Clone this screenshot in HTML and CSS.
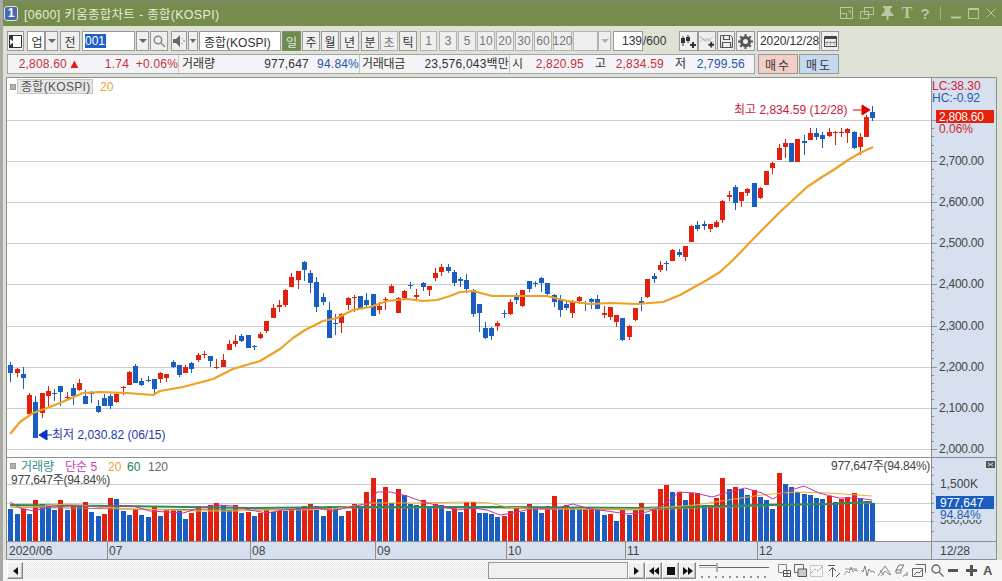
FILE: index.html
```html
<!DOCTYPE html>
<html>

<head>
  <title>[0600] 키움종합차트 - 종합(KOSPI)</title>
  <link rel="stylesheet" href="styles.css">
</head>

<body>
  <header class="titlebar">
    <span class="app-badge">1</span>
    <span class="title-text">[0600] 키움종합차트 - 종합(KOSPI)</span>
    <div class="title-icons">
      <svg class="t-ico" width="13" height="12" viewBox="0 0 13 12"><path d="M.5.5h12v11H.5zM6.5 11.5v-5h-6"/><path d="M8 4h2.5v2.5"/></svg>
      <svg class="t-ico" width="14" height="12" viewBox="0 0 14 12"><path d="M4.5.5h9v7h-9zM.5 4.5h8v7h-8z"/></svg>
      <svg class="t-ico solid" width="13" height="14" viewBox="0 0 13 14"><path d="M2 0h9v2H9.500v4L12.500 8.500v1.500H7.500v4h-2v-4H.5V8.500L3.500 6V2H2z"/></svg>
      <span class="t-letter">T</span>
      <span class="t-help">?</span>
      <span class="t-sep"></span>
      <svg class="t-ico" width="10" height="12" viewBox="0 0 10 12"><path d="M0 10.500h10" stroke-width="2"/></svg>
      <svg class="t-ico" width="11" height="11" viewBox="0 0 11 11"><path d="M.5.5h10v10H.5zM.5 1.500h10" /></svg>
      <svg class="t-ico" width="10" height="10" viewBox="0 0 10 10"><path d="M.5.5l9 9M9.500.5l-9 9"/></svg>
    </div>
  </header>

  <div class="toolbar">
    <button class="btn w17"><svg width="15" height="15" viewBox="0 0 15 15"><path d="M1.500 1.500h12v12h-12z" fill="#fff" stroke="#333"/><path d="M1 1h4v13H1z" fill="#333"/><path d="M2 5l4 3-4 3z" fill="#fff"/></svg></button>
    <div class="field w18 sp3 center">업</div>
    <button class="btn w13"><i class="caret"></i></button>
    <button class="btn w20 sp2">전</button>
    <div class="field w53 sp2"><span class="selected">001</span></div>
    <button class="btn w13 sp1"><i class="caret"></i></button>
    <button class="btn w18 sp1"><svg width="13" height="13" viewBox="0 0 13 13" fill="none" stroke="#888" stroke-width="1.500"><circle cx="5" cy="5" r="3.700"/><path d="M8 8l4 4"/></svg></button>
    <button class="btn w16 sp3"><svg width="13" height="12" viewBox="0 0 13 12"><path d="M0 4h3l4-4v12L3 8H0z" fill="#666"/><path d="M9 3v1M11 5v2M9 8v1" stroke="#888"/></svg></button>
    <button class="btn w10 sp1"><i class="caret small"></i></button>
    <div class="field w82 sp1 name">종합(KOSPI)</div>
    <button class="btn w19 sp1 active">일</button>
    <button class="btn w18 sp1">주</button>
    <button class="btn w18 sp1">월</button>
    <button class="btn w19 sp1">년</button>
    <button class="btn w18 sp2">분</button>
    <button class="btn w18 sp1 dim">초</button>
    <button class="btn w18 sp1">틱</button>
    <button class="btn w17 sp3 dim">1</button>
    <button class="btn w18 sp2 dim">3</button>
    <button class="btn w18 sp1 dim">5</button>
    <button class="btn w18 sp1 dim">10</button>
    <button class="btn w18 sp1 dim">20</button>
    <button class="btn w18 sp1 dim">30</button>
    <button class="btn w18 sp1 dim">60</button>
    <button class="btn w19 sp1 dim">120</button>
    <button class="btn w25 sp1 dim"></button>
    <button class="btn w13 dim"><i class="caret pale"></i></button>
    <div class="field w30 sp2 right">139</div>
    <span class="count">/600</span>
    <button class="btn w19 push"><svg width="17" height="15" viewBox="0 0 17 15"><path d="M3 2v10M8 1v8" stroke="#333"/><path d="M1 4h4v5H1zM6 3h4v4H6z" fill="#333"/><path d="M13 8v6M10 11h6" stroke="#333" stroke-width="2"/></svg></button>
    <button class="btn w18"><svg width="17" height="15" viewBox="0 0 17 15" fill="none"><path d="M1 2l5 5 3-3 5 5" stroke="#999"/><path d="M1 8l4-4 4 4 6-6" stroke="#bbb"/><path d="M13 8v6M10 11h6" stroke="#333" stroke-width="2"/></svg></button>
    <button class="btn w18 sp1"><svg width="15" height="15" viewBox="0 0 15 15" fill="none" stroke="#555"><path d="M1.500 1.500h10l2 2v10h-12z"/><path d="M4.500 1.500v4h6v-4M3.500 13.500v-5h8v5" stroke-width="1.200"/></svg></button>
    <button class="btn w19 sp1"><svg width="15" height="15" viewBox="0 0 15 15"><circle cx="7.500" cy="7.500" r="4" fill="none" stroke="#555" stroke-width="3"/><path d="M7.500 0v3M7.500 12v3M0 7.500h3M12 7.500h3M2.200 2.200l2 2M10.800 10.800l2 2M2.200 12.800l2-2M10.800 4.200l2-2" stroke="#555" stroke-width="2"/></svg></button>
    <div class="field w63 sp2 date">2020/12/28</div>
    <button class="btn w18 sp1"><svg width="13" height="12" viewBox="0 0 13 12" fill="none" stroke="#444"><path d="M.5 1.500h12v10H.5z"/><path d="M.5 2.500h12M.5 3.500h12" stroke="#444"/><path d="M3 6v4M6.500 6v4M10 6v4M1 7.500h11" stroke="#999"/></svg></button>
  </div>

  <div class="quote-row">
    <div class="quote-grid">
      <span class="num up">2,808.60</span>
      <span class="num up tri">▲</span>
      <span class="num up">1.74</span>
      <span class="num up">+0.06%</span>
      <span class="lbl cell-line">거래량</span>
      <span class="num">977,647</span>
      <span class="num down">94.84%</span>
      <span class="lbl cell-line pad">거래대금</span>
      <span class="num">23,576,043백만</span>
      <span class="lbl cell-line pad2">시</span>
      <span class="num up">2,820.95</span>
      <span class="lbl right">고</span>
      <span class="num up">2,834.59</span>
      <span class="lbl right">저</span>
      <span class="num down">2,799.56</span>
    </div>
    <button class="trade buy">매수</button>
    <button class="trade sell">매도</button>
  </div>

  <svg class="chart" width="1002" height="483" viewBox="0 77 1002 483">
    <rect class="panel" x="7" y="78" width="924" height="379"/>
    <rect class="panel" x="7" y="458" width="924" height="84"/>
    <rect class="axis-bg" x="931" y="78" width="65" height="482"/>
    <rect class="axis-bg" x="7" y="542" width="924" height="18"/>
    <path class="frame" d="M6.500 77.500h990v482H6.500zM6.500 457.500h990M6.500 541.500h990M931.500 77.500v482"/>

    <g id="grid"></g>
    <g id="volumes"></g>
    <g id="vol-lines"></g>
    <g id="candles"></g>
    <polyline id="ma20" class="ma"/>

    <!-- 가격 범례 -->
    <rect class="legend-dot" x="10.500" y="84.500" width="5" height="5"/>
    <rect class="legend-chip" x="17.500" y="79.500" width="75" height="14"/>
    <text class="txt muted wide" x="21" y="91">종합(KOSPI)</text>
    <text class="txt orange" x="100" y="91">20</text>

    <!-- 최고, 최저 표시 -->
    <text class="txt high" x="734" y="114">최고 2,834.59 (12/28)</text>
    <path class="high-arrow" d="M853 110h9M862 105l8 5-8 5z"/>
    <path class="low-arrow" d="M52 435h-5M47 430l-8 5 8 5z"/>
    <text class="txt low" x="52" y="439">최저 2,030.82 (06/15)</text>

    <!-- 가격축 -->
    <text class="txt up" x="932" y="90">LC:38.30</text>
    <text class="txt down" x="932" y="102">HC:-0.92</text>
    <g id="price-axis"></g>
    <text class="txt up" x="939" y="133">0.06%</text>
    <rect class="tag-red" x="936" y="110" width="58" height="13"/>
    <text class="txt white tight" x="939" y="121">2,808.60</text>

    <!-- 거래량 범례 -->
    <rect class="legend-dot" x="10.500" y="463.500" width="5" height="5"/>
    <text class="txt teal" x="21" y="471">거래량</text>
    <text class="txt magenta" x="65" y="471">단순 5</text>
    <text class="txt orange" x="108" y="471">20</text>
    <text class="txt green" x="127" y="471">60</text>
    <text class="txt grey" x="148" y="471">120</text>
    <text class="txt soft tight" x="11" y="484">977,647주(94.84%)</text>
    <text class="txt soft tight" x="831" y="470">977,647주(94.84%)</text>

    <!-- 거래량축 -->
    <rect class="close-chip" x="986" y="461" width="9" height="7"/>
    <path class="close-x" d="M988 463l5 3M993 463l-5 3"/>
    <text class="txt soft" x="940" y="488">1,500K</text>
    <text class="txt soft tight" x="940" y="524">500,000</text>
    <rect class="axis-bg" x="936" y="510" width="58" height="10"/>
    <text class="txt down" x="940" y="519">94.84%</text>
    <rect class="tag-blue" x="936" y="496" width="58" height="13"/>
    <text class="txt white" x="940" y="507">977,647</text>

    <!-- 시간축 -->
    <path class="frame" d="M107.500 542v18M250.500 542v18M375.500 542v18M506.500 542v18M625.500 542v18M757.500 542v18"/>
    <text class="txt axis-label" x="9" y="555">2020/06</text>
    <text class="txt axis-label" x="109" y="555">07</text>
    <text class="txt axis-label" x="252" y="555">08</text>
    <text class="txt axis-label" x="377" y="555">09</text>
    <text class="txt axis-label" x="508" y="555">10</text>
    <text class="txt axis-label" x="627" y="555">11</text>
    <text class="txt axis-label" x="759" y="555">12</text>
    <text class="txt axis-label" x="940" y="555">12/28</text>
  </svg>

  <div class="bottombar">
    <button class="scroll-btn first"><i class="tri-left"></i></button>
    <div class="track"></div>
    <div class="thumb"></div>
    <button class="scroll-btn"><i class="tri-right"></i></button>
    <button class="scroll-btn"><i class="tri-left"></i><i class="tri-left"></i></button>
    <button class="scroll-btn"><i class="stop"></i></button>
    <button class="scroll-btn"><i class="tri-right"></i><i class="tri-right"></i></button>
    <svg class="slider" width="70" height="17" viewBox="0 0 70 17"><path d="M0 3.500h17M19 5.500h51M18 1v9" stroke="#666" fill="none"/><path d="M0 5.500h17" stroke="#bbb"/><path d="M3 14v2M10 14v2M17 14v2M24 14v2M31 14v2M38 14v2M45 14v2M52 14v2M59 14v2M66 14v2" stroke="#333"/></svg>
    <div class="tool-icons">
      <svg width="13" height="13" viewBox="0 0 13 13"><path d="M.5.5h8v8h-8z" fill="none" stroke="#888"/><path d="M5.500 6.500h7v6h-7zM9 6.500v6M5.500 9.500h7" fill="#fff" stroke="#555"/></svg>
      <svg width="13" height="13" viewBox="0 0 13 13"><path d="M.5.500h9v8h-9z" fill="none" stroke="#666"/><path d="M4 5h8.500v7.500H4z" fill="#ccc" stroke="#555"/></svg>
      <svg width="14" height="13" viewBox="0 0 14 13" fill="none" stroke="#999" stroke-dasharray="1 1"><path d="M.5 1.500h12v11H.5z"/><path d="M1 9l4-4 3 2 5-5" stroke="#777"/></svg>
      <svg class="pressed" width="14" height="14" viewBox="0 0 14 14" fill="none" stroke="#555"><path d="M1 1.500h7M5.500 13V4M2 7l3.500-3.500L9 7M9 13l4-4" /></svg>
      <svg width="14" height="13" viewBox="0 0 14 13" fill="none" stroke="#888"><path d="M0 11l3-4 2 2 2-6 2 5 2-2 3 1M1 5h12" stroke-width=".9"/></svg>
      <svg width="14" height="13" viewBox="0 0 14 13" fill="none" stroke="#777"><path d="M0 6l2 2 2-6 2 10 2-7 2 3 2-1 2 2" stroke-width=".9"/></svg>
      <svg width="14" height="13" viewBox="0 0 14 13" fill="none" stroke="#777"><path d="M0 12l7-10 6 9M3 12l4-5 5 4M2 6l4 5" stroke-width=".9"/></svg>
      <svg width="14" height="13" viewBox="0 0 14 13" fill="none" stroke="#777"><path d="M1 6l3-5h5L6 6H1zM1 6v3h5V6M8 12h1M10 12v-2M12 12V8" /></svg>
      <svg width="14" height="13" viewBox="0 0 14 13" fill="none" stroke="#666"><path d="M3.500.5h10v8M.5 4.500h10v8H.5z"/><path d="M2 11l3-3 2 1 3-3"/></svg>
      <svg class="zoom" width="13" height="13" viewBox="0 0 13 13" fill="none" stroke="#666" stroke-width="1.300"><circle cx="5" cy="5" r="4"/><path d="M8 8l4.500 4.500"/></svg>
      <svg class="minus" width="10" height="13" viewBox="0 0 10 13"><path d="M0 5h10v3H0z" fill="#555"/></svg>
      <svg class="plus" width="11" height="13" viewBox="0 0 11 13"><path d="M4 1h3v4h4v3H7v4H4V8H0V5h4z" fill="#555"/></svg>
      <span class="tool-a">A</span>
    </div>
  </div>

  <script src="chart.js"></script>
</body>

</html>
```

FILE: styles.css
```css
* {
  box-sizing: border-box;
}

html,
body {
  margin: 0;
  padding: 0;
}

body {
  width: 1002px;
  height: 581px;
  overflow: hidden;
  background-color: #dee2d4;
  border-left: 3px solid #a9a9a9;
  font-family: "Liberation Sans", "Noto Sans CJK KR", sans-serif;
  font-size: 12px;
  color: #333;
}

.titlebar {
  display: flex;
  align-items: center;
  height: 26px;
  margin-left: -3px;
  padding-left: 4px;
  background: linear-gradient(#7d8a68 0, #768c4c 5px, #768c4c 100%);
  color: #e6ebd8;
}

.app-badge {
  width: 14px;
  height: 15px;
  border: 1px solid #dfe6f4;
  border-radius: 3px;
  background-color: #4a68ae;
  color: #fff;
  font-size: 12px;
  font-weight: bold;
  line-height: 13px;
  text-align: center;
}

.title-text {
  margin-left: 6px;
  font-size: 12.5px;
  letter-spacing: 0.3px;
}

.title-icons {
  display: flex;
  align-items: center;
  margin-left: auto;
  padding-right: 6px;
  gap: 7px;
}

.t-ico {
  fill: none;
  stroke: #bcc6a4;
}

.t-ico.solid {
  fill: #bcc6a4;
  stroke: none;
}

.t-letter {
  width: 12px;
  color: #bcc6a4;
  font-family: "Liberation Serif", serif;
  font-size: 16px;
  font-weight: bold;
  text-align: center;
}

.t-help {
  width: 10px;
  color: #bcc6a4;
  font-size: 15px;
  font-weight: bold;
  text-align: center;
}

.t-sep {
  width: 1px;
  height: 14px;
  margin: 0 3px;
  background-color: #a3b083;
}

.toolbar {
  display: flex;
  height: 26px;
  padding: 5px 0 0 4px;
}

.btn,
.field {
  display: flex;
  flex: none;
  align-items: center;
  justify-content: center;
  height: 20px;
  padding: 0;
  border: 1px solid #9a9a9a;
  background-color: #efefef;
  color: #333;
  font-family: inherit;
  font-size: 12px;
}

.field {
  justify-content: flex-start;
  padding-left: 2px;
  background-color: #fff;
}

.field.center {
  justify-content: center;
}

.field.right {
  justify-content: flex-end;
}

.w10 { width: 10px; }
.w13 { width: 13px; }
.w16 { width: 16px; }
.w17 { width: 17px; }
.w18 { width: 18px; }
.w19 { width: 19px; }
.w20 { width: 20px; }
.w25 { width: 25px; }
.w30 { width: 30px; }
.w53 { width: 53px; }
.w63 { width: 63px; }
.w82 { width: 82px; }

.sp1 { margin-left: 1px; }
.sp2 { margin-left: 2px; }
.sp3 { margin-left: 3px; }
.push { margin-left: 11px; }

.selected {
  background-color: #1f5fc8;
  color: #fff;
  padding-right: 1px;
}

.name {
  padding-left: 4px;
}

.date {
  letter-spacing: -0.1px;
}

.active {
  border-color: #7c9060;
  background-color: #6f8a50;
  color: #e6ebd8;
}

.dim {
  border-color: #b4b4b4;
  color: #777;
}

.count {
  width: 25px;
  line-height: 20px;
  color: #333;
}

.caret {
  width: 0;
  height: 0;
  border-top: 4px solid #666;
  border-left: 4px solid transparent;
  border-right: 4px solid transparent;
}

.caret.small {
  border-left-width: 3px;
  border-right-width: 3px;
}

.caret.pale {
  border-top-color: #b0b0b0;
}

.quote-row {
  display: flex;
  height: 25px;
  padding: 2px 0 0 4px;
}

.quote-grid {
  display: grid;
  grid-template-columns: 59px 14px 48px 49px 39px 92px 50px 53px 97px 15px 60px 22px 58px 22px 59px;
  width: 748px;
  height: 20px;
  border: 1px solid #a4a4a4;
  background-color: #f2f4f8;
  line-height: 18px;
}

.num {
  text-align: right;
  letter-spacing: 0.2px;
}

.up {
  color: #c9303a;
  fill: #c9303a;
}

.down {
  color: #2a55a8;
  fill: #2a55a8;
}

.tri {
  font-size: 13px;
  color: #e2200e;
}

.lbl {
  padding-left: 3px;
  background-color: #f4f5f2;
}

.lbl.right {
  padding-left: 0;
  background: none;
  text-align: right;
}

.cell-line {
  border-left: 1px solid #c6c6c6;
}

.pad {
  padding-left: 2px;
  letter-spacing: -0.3px;
}

.pad2 {
  padding-left: 2px;
}

.trade {
  width: 40px;
  height: 20px;
  padding: 0;
  border: 1px solid #9a9a9a;
  color: #333;
  font-family: inherit;
  font-size: 12px;
  letter-spacing: 2px;
}

.buy {
  margin-left: 3px;
  background-color: #f4cdc7;
}

.sell {
  margin-left: 1px;
  background-color: #c5d9ef;
}

.chart {
  display: block;
  margin-left: -3px;
}

.panel {
  fill: #fff;
}

.axis-bg {
  fill: #d6e0ee;
}

.frame {
  fill: none;
  stroke: #8e8e8e;
}

.gridline {
  stroke: #cdcdcd;
}

.tick {
  stroke: #8e8e8e;
}

.ma {
  fill: none;
  stroke: #f0a023;
  stroke-width: 2.2;
  stroke-linejoin: round;
}

.txt {
  font-family: "Liberation Sans", "Noto Sans CJK KR", sans-serif;
  font-size: 12px;
  fill: #333;
}

.txt.soft { fill: #444; }
.txt.tight { letter-spacing: -0.25px; }
.txt.wide { letter-spacing: 0.3px; }
.txt.muted { fill: #555; }
.txt.orange { fill: #e8a33a; }
.txt.teal { fill: #2e8b8b; }
.txt.magenta { fill: #c63cab; }
.txt.green { fill: #1f8048; }
.txt.grey { fill: #666; }
.txt.white { fill: #fff; }
.txt.high { fill: #c8203c; }
.txt.low { fill: #1c3aa8; }
.txt.up { fill: #d0232e; }
.txt.down { fill: #2a5bb4; }
.txt.axis-label { fill: #444; }

.legend-dot {
  fill: #b4b4b4;
  stroke: #999;
}

.legend-chip {
  fill: #e6e6e6;
  stroke: #c8c8c8;
}

.high-arrow {
  fill: #e00000;
  stroke: #e00000;
}

.low-arrow {
  fill: #0f2fc0;
  stroke: #0f2fc0;
}

.tag-red {
  fill: #e6200c;
}

.tag-blue {
  fill: #1b5cc0;
}

.close-chip {
  fill: #555;
}

.close-x {
  stroke: #ddd;
}

.bottombar {
  display: flex;
  align-items: center;
  height: 21px;
  background-color: #f6f6f6;
  padding-left: 4px;
}

.scroll-btn {
  display: flex;
  flex: none;
  align-items: center;
  justify-content: center;
  width: 17px;
  height: 17px;
  padding: 0;
  border: 1px solid #888;
  border-top-color: #fff;
  border-left-color: #fff;
  background-color: #f0f0f0;
  box-shadow: inset -1px -1px 0 #bbb;
}

.scroll-btn.first {
  width: 16px;
}

.track {
  flex: none;
  width: 465px;
  height: 17px;
  background-color: #f2f2f2;
  background-image: repeating-conic-gradient(#e6e6e6 0 25%, #fbfbfb 0 50%);
  background-size: 2px 2px;
}

.thumb {
  flex: none;
  width: 140px;
  height: 17px;
  border: 1px solid #999;
  background-color: #f0f0f0;
}

.tri-left,
.tri-right {
  width: 0;
  height: 0;
  border-top: 4px solid transparent;
  border-bottom: 4px solid transparent;
}

.tri-left {
  border-right: 5px solid #111;
}

.tri-right {
  border-left: 5px solid #111;
}

.stop {
  width: 8px;
  height: 8px;
  background-color: #111;
}

.slider {
  flex: none;
  margin-left: 3px;
}

.tool-icons {
  display: flex;
  align-items: center;
  gap: 3px;
  margin-left: 9px;
}

.tool-icons svg {
  flex: none;
}

.tool-icons .zoom {
  margin-left: 2px;
}

.tool-icons .minus {
  margin-left: 1px;
}

.tool-icons .plus {
  margin-left: 5px;
}

.tool-a {
  margin-left: 3px;
  color: #555;
  font-size: 13px;
  font-weight: bold;
}
```

FILE: chart.js
```js
const NS = 'http://www.w3.org/2000/svg';
const STEP = 6.246;
const X0 = 10.3;

// [색, 몸통 위, 몸통 아래, 꼬리 위, 꼬리 아래] (픽셀 y)
const candles = [
  ['b',365,373,362,382],['r',369,373,368,377],['b',374,378,367,389],['r',395,414,393,416],
  ['b',402,438,396,438],['r',393,413,393,418],['r',391,396,386,407],['b',393,394,389,401],
  ['b',386,392,386,406],['r',397,398,392,401],['b',388,396,384,405],['r',383,390,379,391],
  ['b',396,404,390,404],['b',393,394,391,403],['b',406,412,400,413],['b',398,406,394,406],
  ['b',396,406,394,409],['r',394,402,393,403],['r',387,388,386,395],['r',372,385,371,385],
  ['b',366,383,364,383],['b',381,385,378,386],['b',380,381,376,382],['b',379,389,379,393],
  ['r',373,379,372,383],['r',374,378,374,382],['b',362,367,360,368],['b',365,375,365,377],
  ['r',367,373,365,373],['b',363,369,362,373],['r',355,360,353,362],['r',354,355,351,358],
  ['b',356,361,356,367],['r',367,368,359,369],['r',360,367,354,367],['r',344,350,340,350],
  ['r',341,344,335,347],['b',336,341,334,342],['b',335,348,335,348],['b',346,347,345,350],
  ['r',334,338,332,339],['r',321,331,321,333],['r',308,318,304,318],['r',305,307,300,312],
  ['r',290,305,289,307],['r',277,287,273,287],['r',271,280,271,289],['b',262,270,261,281],
  ['b',273,283,270,293],['b',282,307,277,312],['b',297,302,293,305],['b',310,338,302,338],
  ['b',323,324,314,335],['r',314,323,313,333],['r',298,305,297,310],['r',297,298,295,312],
  ['b',296,309,296,309],['b',300,305,293,308],['b',294,316,294,316],['r',306,310,302,314],
  ['r',299,300,297,310],['r',286,293,284,293],['r',298,313,297,313],['r',291,298,290,300],
  ['b',285,286,282,289],['r',295,297,289,299],['b',283,287,282,291],['r',286,290,286,296],
  ['r',273,278,268,281],['r',267,272,264,276],['b',267,271,264,273],['b',272,283,270,286],
  ['b',279,281,277,287],['b',280,289,274,293],['b',290,314,289,317],['b',304,313,304,332],
  ['b',328,338,322,339],['b',328,336,327,340],['r',323,326,321,331],['b',313,314,310,318],
  ['r',302,314,299,315],['b',297,300,293,304],['r',290,306,290,307],['b',281,289,281,292],
  ['b',283,284,281,287],['b',278,283,277,292],['b',283,294,283,296],['b',295,302,294,307],
  ['b',300,310,295,317],['b',304,308,302,310],['r',302,313,300,318],['r',297,301,296,304],
  ['b',303,304,301,311],['b',299,302,298,309],['b',299,309,295,309],['r',313,315,306,318],
  ['r',307,317,307,320],['r',315,322,315,327],['b',318,340,318,341],['r',326,337,325,340],
  ['r',308,320,308,321],['b',301,303,297,311],['r',279,297,279,298],['b',276,279,273,283],
  ['r',265,270,261,272],['b',263,264,261,271],['r',250,261,249,261],['b',252,255,249,257],
  ['r',246,257,246,261],['r',226,242,225,242],['b',225,229,221,231],['b',224,226,221,230],
  ['r',224,229,224,232],['r',222,227,220,228],['r',201,220,200,223],['r',195,197,191,201],
  ['b',187,203,185,210],['r',192,201,192,207],['r',189,193,188,196],['b',183,207,183,207],
  ['r',188,198,187,199],['r',171,185,171,185],['r',163,168,162,174],['r',148,160,144,160],
  ['r',143,147,139,158],['b',143,162,143,162],['r',139,162,139,162],['b',141,143,135,155],
  ['r',133,140,128,140],['b',133,137,128,140],['b',135,139,132,148],['r',132,136,128,137],
  ['r',132,133,131,145],['r',132,133,128,137],['r',129,133,128,143],['b',132,148,131,149],
  ['r',137,147,133,155],['r',117,137,115,137],['b',112,118,106,121]
];

// 거래량 막대: 색과 막대 위쪽 y
const volumes = [
  'b509','b514','r509','b514','r500','b504','b506','b510','r500','b510','r506','b505','r502','b512',
  'b516','r514','r498','b499','b511','b515','r509','b515','b517','r507','b516','r510','r509','b510',
  'b519','r513','r506','b512','r505','r503','b505','b510','r505','b513','r512','b516','r513','r509',
  'b512','r511','b511','r509','b507','r506','r504','b506','b516','r506','b509','b516','r511','r504',
  'b506','r492','r478','b499','r487','b503','r489','b495','b504','b505','r500','b507','r504','b505',
  'b511','r508','b512','r502','r502','b513','b513','b514','b517','r516','r511','r507','b512','r504',
  'b508','b513','r506','r496','b507','r505','b507','b509','r509','r508','b510','b515','r514','b521',
  'r510','b515','r510','r503','b514','r510','r489','r485','b492','r492','b500','r493','r493','b505',
  'r505','r498','r478','b489','r487','b489','b495','r490','b497','b500','b509','r473','b484','b487',
  'b492','b494','b495','b498','b499','r496','b502','r499','r497','r493','b498','b501','b503'
];

const ma20 = [
  [10,434],[20,422],[33,413],[50,407],[67,400],[83,393],[100,392],[127,393],[153,395],[160,391],
  [183,387],[213,379],[233,369],[260,361],[280,349],[293,338],[305,330],[323,321],[337,318],[353,310],
  [370,307],[387,301],[407,299],[423,301],[437,300],[450,296],[460,292],[473,291],[492,296],[517,296],
  [547,296],[567,301],[590,304],[610,303],[637,304],[663,302],[680,295],[707,280],[720,272],[733,260],
  [760,232],[780,212],[807,187],[822,177],[835,169],[848,160],[860,153],[873,147]
];

const volLines = [
  { color: '#8c8c5a', width: 1, points: [[10,507],[120,509],[250,510],[350,508],[500,508],[640,510],[760,506],[830,504],[872,503]] },
  { color: '#2e8b57', width: 2, points: [[10,505],[120,506],[250,508],[345,507],[500,507],[640,508],[760,505],[830,504],[872,502]] },
  { color: '#f0b030', width: 1, points: [[10,507],[33,507],[67,504],[100,507],[133,509],[167,510],[200,511],[233,511],[267,510],[300,510],[333,509],[345,507],[373,503],[407,503],[473,502],[490,503],[507,507],[540,509],[573,509],[607,509],[640,509],[670,507],[695,505],[728,500],[762,495],[795,492],[829,493],[872,496]] },
  { color: '#c832a8', width: 1, points: [[10,502],[20,508],[33,511],[50,507],[67,506],[83,506],[100,507],[113,506],[133,506],[150,511],[167,512],[183,513],[200,508],[217,505],[233,506],[250,510],[267,513],[283,510],[300,509],[317,508],[333,511],[345,508],[370,503],[377,492],[390,492],[407,496],[423,502],[440,506],[457,510],[473,508],[487,510],[500,515],[513,513],[530,509],[553,509],[573,504],[590,509],[607,511],[627,514],[647,512],[660,507],[670,500],[679,492],[695,493],[712,497],[729,492],[745,488],[762,493],[773,499],[785,492],[804,486],[819,493],[839,498],[855,498],[872,500]] }
];

function el(parent, name, attrs) {
  const node = document.createElementNS(NS, name);
  for (const key in attrs) node.setAttribute(key, attrs[key]);
  parent.appendChild(node);
  return node;
}

function drawGrid() {
  const grid = document.getElementById('grid');
  const axis = document.getElementById('price-axis');
  // 2,800부터 2,000까지 41.1px 간격
  for (let i = 0; i < 9; i++) {
    const y = Math.round(120 + i * 41.1) + 0.5;
    el(grid, 'path', { class: 'gridline', d: 'M7 ' + y + 'H931' });
    el(grid, 'path', { class: 'tick', d: 'M931 ' + y + 'h6' });
    for (let j = 1; j < 5; j++) {
      const minor = Math.round(120 + (i + j / 5) * 41.1) + 0.5;
      if (minor < 456) el(grid, 'path', { class: 'tick', d: 'M931 ' + minor + 'h3' });
    }
    if (i > 0) {
      const label = el(axis, 'text', { class: 'txt soft tight', x: 939, y: y + 3.5 });
      label.textContent = (2800 - i * 100).toLocaleString('en-US') + '.00';
    }
  }
  [484.5, 503.5, 521.5].forEach(y => {
    el(grid, 'path', { class: 'gridline', d: 'M7 ' + y + 'H931' });
  });
  [467, 475, 484, 493, 503, 512, 521, 531].forEach(y => {
    el(grid, 'path', { class: 'tick', d: 'M931 ' + (y + 0.5) + 'h3' });
  });
}

function drawVolumes() {
  const group = document.getElementById('volumes');
  volumes.forEach((v, i) => {
    const x = Math.round(X0 + STEP * i) - 2;
    const top = parseInt(v.slice(1), 10);
    el(group, 'rect', { x: x, y: top, width: 5, height: 541 - top, fill: v[0] === 'r' ? '#e2200e' : '#1b5ec2' });
  });
  const lines = document.getElementById('vol-lines');
  volLines.forEach(line => {
    el(lines, 'polyline', {
      fill: 'none',
      stroke: line.color,
      'stroke-width': line.width,
      points: line.points.map(p => p.join(',')).join(' ')
    });
  });
}

function drawCandles() {
  const group = document.getElementById('candles');
  candles.forEach((c, i) => {
    const x = Math.round(X0 + STEP * i);
    const color = c[0] === 'r' ? '#e2200e' : '#1b5ec2';
    el(group, 'rect', { x: x, y: c[3], width: 1, height: c[4] - c[3], fill: color });
    el(group, 'rect', { x: x - 2, y: c[1], width: 5, height: c[2] - c[1], fill: color });
  });
}

drawGrid();
drawVolumes();
drawCandles();
document.getElementById('ma20').setAttribute('points', ma20.map(p => p.join(',')).join(' '));
```
